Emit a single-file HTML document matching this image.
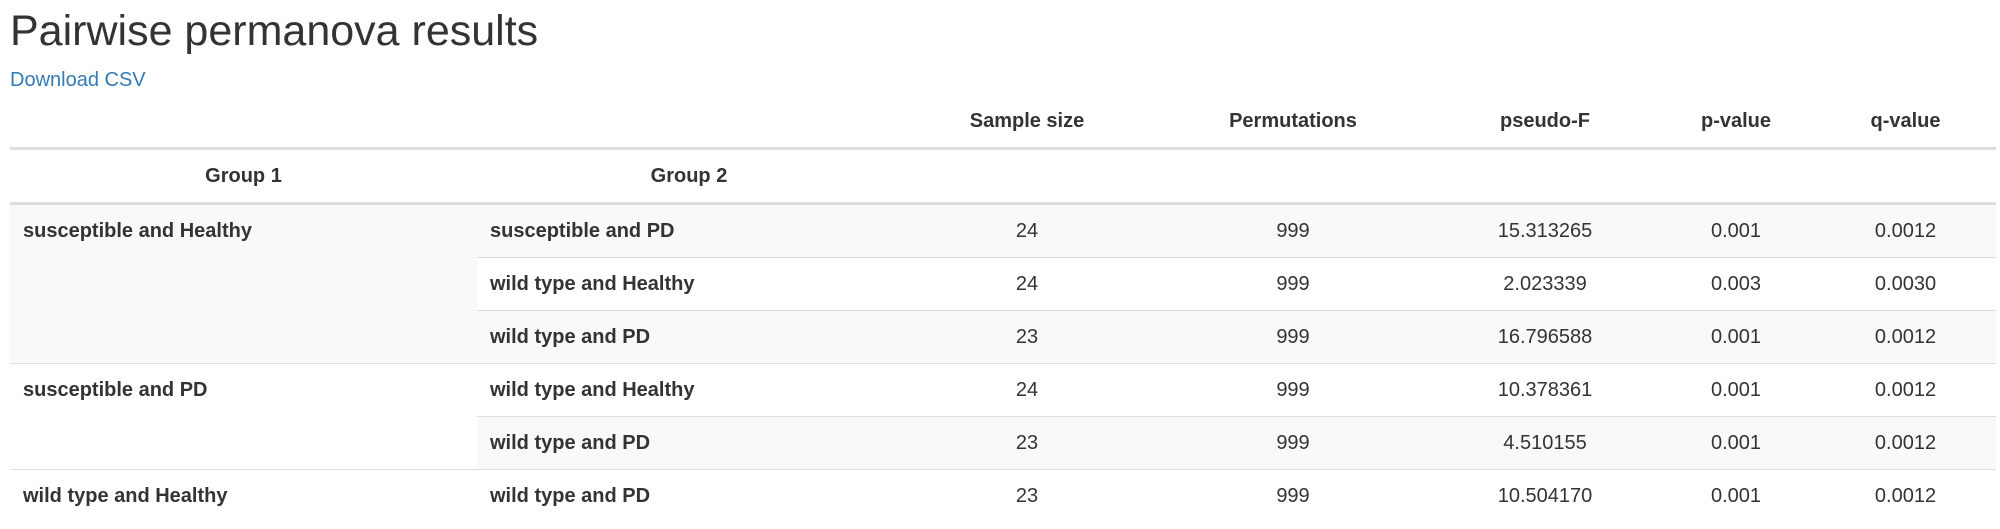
<!DOCTYPE html>
<html><head><meta charset="utf-8"><style>
html,body{margin:0;padding:0;background:#fff;}
body{width:2000px;height:521px;overflow:hidden;font-family:"Liberation Sans",Helvetica,Arial,sans-serif;color:#333;font-size:20px;}
h2{font-weight:500;font-size:43px;line-height:47px;margin:8px 0 0 10px;color:#333;}
p{margin:11px 0 0 10px;line-height:29px;}
a{color:#337ab7;text-decoration:none;}
table{border-collapse:collapse;table-layout:fixed;width:1986px;margin-left:10px;}
th,td{padding:11px 13px;line-height:30px;border-top:1px solid #ddd;font-size:20px;}
thead th{text-align:center;font-weight:bold;border-top:0;border-bottom:3px solid #ddd;}
tbody th{text-align:left;vertical-align:top;font-weight:bold;}
tbody td{text-align:center;}
tbody tr:nth-of-type(odd) th,tbody tr:nth-of-type(odd) td{background:#f9f9f9;}
</style></head><body>
<h2>Pairwise permanova results</h2>
<p><a>Download CSV</a></p>
<table>
<colgroup><col style="width:467px"><col style="width:424px"><col style="width:252px"><col style="width:280px"><col style="width:224px"><col style="width:158px"><col style="width:181px"></colgroup>
<thead>
<tr><th></th><th></th><th>Sample size</th><th>Permutations</th><th>pseudo-F</th><th>p-value</th><th>q-value</th></tr>
<tr><th>Group 1</th><th>Group 2</th><th></th><th></th><th></th><th></th><th></th></tr>
</thead>
<tbody>
<tr><th rowspan="3">susceptible and Healthy</th><th>susceptible and PD</th><td>24</td><td>999</td><td>15.313265</td><td>0.001</td><td>0.0012</td></tr>
<tr><th>wild type and Healthy</th><td>24</td><td>999</td><td>2.023339</td><td>0.003</td><td>0.0030</td></tr>
<tr><th>wild type and PD</th><td>23</td><td>999</td><td>16.796588</td><td>0.001</td><td>0.0012</td></tr>
<tr><th rowspan="2">susceptible and PD</th><th>wild type and Healthy</th><td>24</td><td>999</td><td>10.378361</td><td>0.001</td><td>0.0012</td></tr>
<tr><th>wild type and PD</th><td>23</td><td>999</td><td>4.510155</td><td>0.001</td><td>0.0012</td></tr>
<tr><th>wild type and Healthy</th><th>wild type and PD</th><td>23</td><td>999</td><td>10.504170</td><td>0.001</td><td>0.0012</td></tr>
</tbody>
</table>
</body></html>
